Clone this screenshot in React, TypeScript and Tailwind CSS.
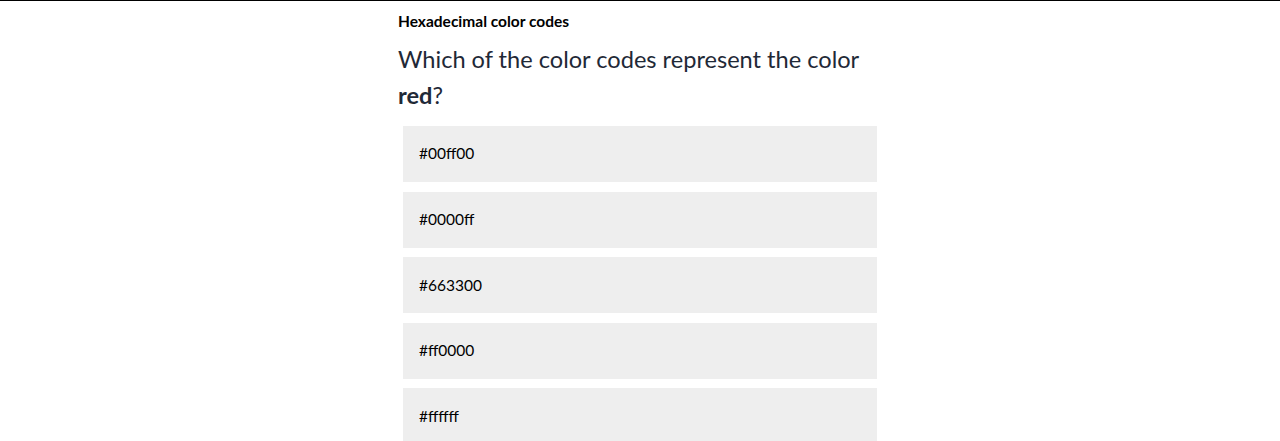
const options = ["#00ff00", "#0000ff", "#663300", "#ff0000", "#ffffff"];

export default function App() {
  return (
    <div className="min-h-screen bg-white border-t border-black font-['Lato','Liberation_Sans',sans-serif]">
      <div className="w-[484px] mx-auto pt-[10px]">
        <p className="text-[15.5px] leading-[20px] font-bold text-black">Hexadecimal color codes</p>
        <h1 className="mt-[10px] text-[23.6px] leading-[36px] text-[#1f2937]">
          Which of the color codes represent the color <span className="font-bold">red</span>?
        </h1>
        <div className="mt-[13px] px-[5px] flex flex-col">
          {options.map((o) => (
            <div key={o} className="h-[56px] mb-[9.6px] bg-[#eeeeee] flex items-center pl-[16px] text-[15.5px] text-black">
              {o}
            </div>
          ))}
        </div>
      </div>
    </div>
  );
}
